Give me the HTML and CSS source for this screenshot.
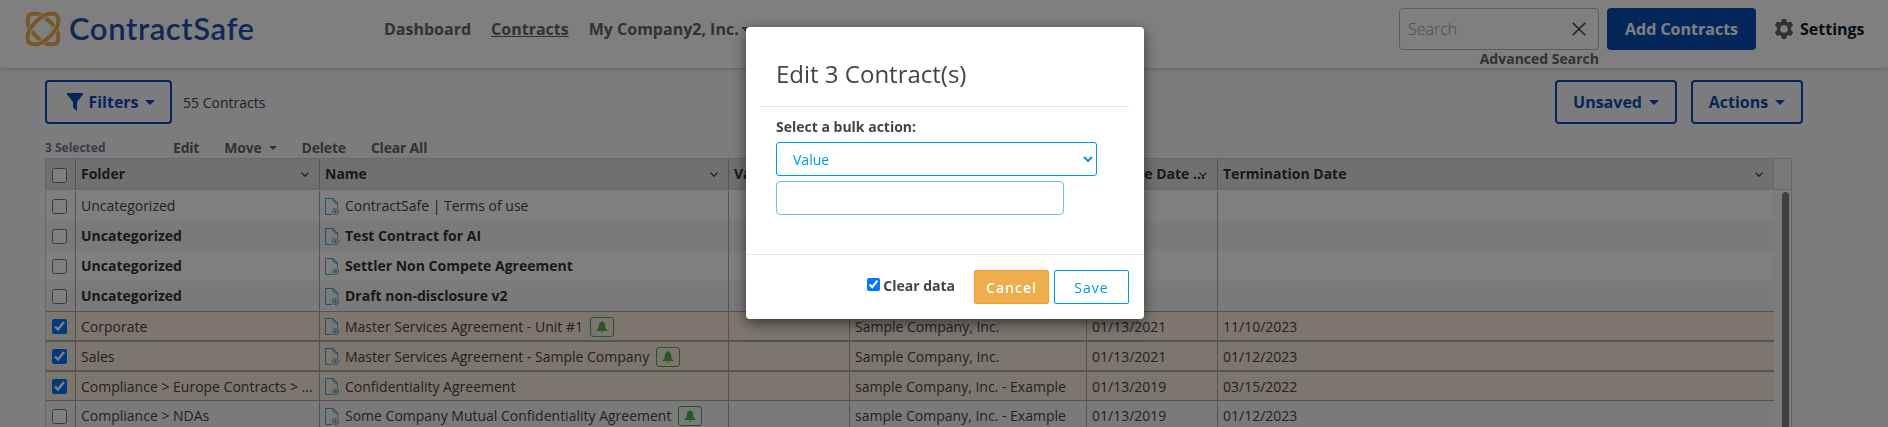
FILE: index.html
```html
<!DOCTYPE html>
<html lang="en">
  <head>
    <meta charset="utf-8" />
    <title>ContractSafe - Contracts</title>
    <link rel="stylesheet" href="styles.css">
  </head>
  <body>
    <svg class="sprite" width="0" height="0">
      <symbol id="doc" viewBox="0 0 14 17">
        <path d="M7 16.5H.5V.5H8L12.5 5V9.5M8 .5V3l2 2h2.500M8 1l4 4" fill="none" stroke="currentColor" />
        <circle cx="10.500" cy="13.500" r="3" fill="none" stroke="currentColor" />
        <path d="M10.500 11.800v3.400M8.800 13.500h3.400" stroke="currentColor" />
      </symbol>
      <symbol id="bell" viewBox="0 0 12 12">
        <path d="M6 0c.5 0 .8.400.8.900C8.600 1.400 9.200 3 9.200 4.500c0 2.500.8 3.800 2.300 4.700v.8H.5v-.8C2 8.300 2.800 7 2.800 4.500 2.800 3 3.400 1.400 5.200.900 5.200.400 5.500 0 6 0zM4.800 10.800h2.400c0 1.500-2.400 1.500-2.400 0z" fill="currentColor" />
      </symbol>
      <symbol id="chevron" viewBox="0 0 8 5">
        <path d="M.5.700L4 4.200 7.500.700" fill="none" stroke="currentColor" stroke-width="1.200" />
      </symbol>
      <path id="ring" d="M8.500 2.700H11C19 2.700 33.300 17 33.300 25V27.500Q33.300 33.300 27.500 33.300H25C17 33.300 2.700 19 2.700 11V8.500Q2.700 2.700 8.500 2.700z" fill="none" />
    </svg>

    <header class="topbar">
      <a class="logo">
        <svg width="36" height="36" viewBox="0 0 36 36">
          <use href="#ring" stroke="#f0ad4e" stroke-width="4" />
          <g transform="matrix(-1 0 0 1 36 0)">
            <path d="M14 3.500C21 6 30 15 32.500 22M22 32.500C15 30 6 21 3.500 14" fill="none" stroke="#fff" stroke-width="5.600" />
            <use href="#ring" stroke="#f0ad4e" stroke-width="4" />
          </g>
        </svg>
        <span class="logo-text">ContractSafe</span>
      </a>
      <nav class="nav">
        <a>Dashboard</a>
        <a class="active">Contracts</a>
        <a>My Company2, Inc.<i class="caret"></i></a>
      </nav>
      <div class="search">
        <div class="search-box">
          <span>Search</span>
          <svg width="14" height="14" viewBox="0 0 14 14"><path d="M.7.700l12.600 12.600M13.300.700L.7 13.300" stroke="#444" stroke-width="1.600" /></svg>
        </div>
        <a class="advanced">Advanced Search</a>
      </div>
      <a class="add">Add Contracts</a>
      <a class="settings">
        <svg width="20" height="20" viewBox="0 0 20 20">
          <path fill="#646567" fill-rule="evenodd" d="M7.900 0h4.200l.6 2.800 1.500.8 2.600-1.100 2.300 3.400-2 2.200v2.900l2 2.400-2.300 3.600-2.600-.9-1.500.9-.6 3H7.900l-.6-3-1.500-.9-2.600.9-2.300-3.600 2-2.400V8.100l-2-2.200 2.300-3.400 2.600 1.100 1.500-.8zM10 6.200a3.800 3.800 0 1 0 0 7.600 3.800 3.800 0 0 0 0-7.600z" />
        </svg>
        Settings
      </a>
    </header>

    <main class="page">
      <div class="toolbar">
        <a class="btn filters">
          <svg width="16" height="18" viewBox="0 0 16 18"><path d="M0 0h16v1.500L10 9v9l-4-3.200V9L0 1.500z" fill="#0b4db5" /></svg>
          Filters<i class="caret"></i>
        </a>
        <span class="count">55 Contracts</span>
        <a class="btn unsaved">Unsaved<i class="caret"></i></a>
        <a class="btn actions">Actions<i class="caret"></i></a>
      </div>
      <div class="selection">
        <span class="selected">3 Selected</span>
        <a>Edit</a>
        <a>Move<i class="caret"></i></a>
        <a>Delete</a>
        <a>Clear All</a>
      </div>

      <div class="grid">
        <div class="row head">
          <div class="check"><input type="checkbox" /></div>
          <div>Folder<svg class="chev"><use href="#chevron" /></svg></div>
          <div>Name<svg class="chev"><use href="#chevron" /></svg></div>
          <div>Value</div>
          <div>Company</div>
          <div class="eff">Effective Date ...<svg class="chev"><use href="#chevron" /></svg></div>
          <div>Termination Date<svg class="chev"><use href="#chevron" /></svg></div>
          <div class="corner"></div>
        </div>
        <div class="rows">
          <div class="list">
            <div class="row">
              <div class="check"><input type="checkbox" /></div>
              <div>Uncategorized</div>
              <div><svg class="doc"><use href="#doc" /></svg>ContractSafe | Terms of use</div>
              <div></div><div></div><div></div><div></div>
            </div>
            <div class="row unread">
              <div class="check"><input type="checkbox" /></div>
              <div>Uncategorized</div>
              <div><svg class="doc"><use href="#doc" /></svg>Test Contract for AI</div>
              <div></div><div></div><div></div><div></div>
            </div>
            <div class="row unread">
              <div class="check"><input type="checkbox" /></div>
              <div>Uncategorized</div>
              <div><svg class="doc"><use href="#doc" /></svg>Settler Non Compete Agreement</div>
              <div></div><div></div><div></div><div></div>
            </div>
            <div class="row unread">
              <div class="check"><input type="checkbox" /></div>
              <div>Uncategorized</div>
              <div><svg class="doc"><use href="#doc" /></svg>Draft non-disclosure v2</div>
              <div></div><div></div><div></div><div></div>
            </div>
            <div class="row picked">
              <div class="check"><input type="checkbox" checked /></div>
              <div>Corporate</div>
              <div><svg class="doc"><use href="#doc" /></svg>Master Services Agreement - Unit #1<span class="alert"><svg><use href="#bell" /></svg></span></div>
              <div></div>
              <div>Sample Company, Inc.</div>
              <div>01/13/2021</div>
              <div>11/10/2023</div>
            </div>
            <div class="row picked">
              <div class="check"><input type="checkbox" checked /></div>
              <div>Sales</div>
              <div><svg class="doc"><use href="#doc" /></svg>Master Services Agreement - Sample Company<span class="alert"><svg><use href="#bell" /></svg></span></div>
              <div></div>
              <div>Sample Company, Inc.</div>
              <div>01/13/2021</div>
              <div>01/12/2023</div>
            </div>
            <div class="row picked">
              <div class="check"><input type="checkbox" checked /></div>
              <div>Compliance &gt; Europe Contracts &gt; ...</div>
              <div><svg class="doc"><use href="#doc" /></svg>Confidentiality Agreement</div>
              <div></div>
              <div>sample Company, Inc. - Example</div>
              <div>01/13/2019</div>
              <div>03/15/2022</div>
            </div>
            <div class="row">
              <div class="check"><input type="checkbox" /></div>
              <div>Compliance &gt; NDAs</div>
              <div><svg class="doc"><use href="#doc" /></svg>Some Company Mutual Confidentiality Agreement<span class="alert"><svg><use href="#bell" /></svg></span></div>
              <div></div>
              <div>sample Company, Inc. - Example</div>
              <div>01/13/2019</div>
              <div>01/12/2023</div>
            </div>
          </div>
          <div class="track"><div class="thumb"></div></div>
        </div>
      </div>
    </main>

    <div class="overlay">
      <div class="modal">
        <h4 class="modal-title">Edit 3 Contract(s)</h4>
        <div class="modal-body">
          <label for="action">Select a bulk action:</label>
          <select id="action"><option>Value</option></select>
          <input type="text" class="value" />
        </div>
        <div class="modal-footer">
          <label class="clear"><input type="checkbox" checked />Clear data</label>
          <button class="cancel">Cancel</button>
          <button class="save">Save</button>
        </div>
      </div>
    </div>
  </body>
</html>
```

FILE: styles.css
```css
* {
  box-sizing: border-box;
}

body {
  display: flex;
  flex-direction: column;
  margin: 0;
  height: 100vh;
  overflow: hidden;
  background: #f9f9fc;
  color: #444;
  font-family: "Open Sans", "Noto Sans", sans-serif;
  font-size: 14px;
  line-height: 20px;
}

.sprite {
  position: absolute;
}

.caret {
  display: inline-block;
  margin-left: 7px;
  border: 5px solid transparent;
  border-top-color: currentColor;
  border-bottom: 0;
  vertical-align: 3px;
}

/* Top bar */
.topbar {
  position: relative;
  display: flex;
  flex: none;
  align-items: flex-start;
  height: 68px;
  padding: 8px 0 0 25px;
  background: #fff;
  box-shadow: 0 1px 5px rgba(0, 0, 0, 0.2);
  font-weight: 700;
  font-size: 16px;
}

.logo {
  display: flex;
  width: 359px;
  margin-top: 3px;
}

.logo svg {
  flex: none;
}

.logo-text {
  margin: 1px 0 0 8px;
  color: #2350ae;
  font: 600 31px/32px Lato, sans-serif;
  letter-spacing: 0.6px;
}

.nav {
  display: flex;
  gap: 20px;
  margin-top: 11px;
  color: #646567;
  white-space: nowrap;
}

.nav .caret {
  margin-left: 2px;
}

.nav .active {
  text-decoration: underline;
}

.search {
  width: 200px;
  margin-left: auto;
  text-align: right;
}

.search-box {
  display: flex;
  align-items: center;
  justify-content: space-between;
  height: 42px;
  padding: 0 12px 0 8px;
  border: 1px solid #bbb;
  border-radius: 4px;
  color: #999;
  font-weight: 300;
}

.advanced {
  display: block;
  color: #646567;
  font-size: 14px;
  line-height: 18px;
}

.add {
  width: 149px;
  height: 42px;
  margin-left: 8px;
  border-radius: 4px;
  background: #0b4db5;
  color: #fff;
  line-height: 42px;
  text-align: center;
}

.settings {
  display: flex;
  width: 114px;
  margin: 11px 0 0 18px;
  gap: 6px;
  color: #0c1b2d;
}

/* Page actions */
.page {
  flex: 1;
  display: flex;
  flex-direction: column;
  min-height: 0;
  padding: 12px 0 0 45px;
}

.toolbar {
  display: flex;
  align-items: center;
  width: 1758px;
}

.btn {
  display: flex;
  align-items: center;
  justify-content: center;
  height: 44px;
  border: 2px solid #0b4db5;
  border-radius: 4px;
  color: #0b4db5;
  font-size: 16px;
  font-weight: 700;
}

.filters {
  width: 127px;
  padding-left: 5px;
  gap: 5px;
}

.filters .caret {
  margin-left: 1px;
}

.count {
  margin-left: 11px;
  padding-top: 2px;
}

.unsaved {
  width: 122px;
  margin-left: auto;
}

.actions {
  width: 112px;
  margin-left: 14px;
}

.selection {
  display: flex;
  gap: 25px;
  height: 34px;
  padding-top: 14px;
  color: #646567;
  font-weight: 700;
  letter-spacing: -0.2px;
}

.selection .caret {
  border-width: 4px 4px 0;
}

.selected {
  width: 103px;
  color: #75798a;
  font-size: 12px;
  letter-spacing: 0;
}

/* Contract grid */
.grid {
  display: flex;
  flex: 1;
  flex-direction: column;
  width: 1747px;
  min-height: 0;
  border: 1px solid #d0d0d0;
  border-bottom: 0;
}

.row {
  display: grid;
  flex: none;
  grid-template-columns: 30px 244px 409px 121px 237px 131px 556px;
  height: 30px;
  background: #fff;
  white-space: nowrap;
}

.row > div {
  display: flex;
  align-items: center;
  padding-left: 5px;
  border-right: 1px solid #a8a8aa;
  overflow: hidden;
}

.row > div:nth-child(7) {
  border-right: 0;
}

.row > .check {
  padding-left: 6px;
}

.check input {
  width: 15px;
  height: 15px;
  margin: 0;
}

.head {
  grid-template-columns: 30px 244px 409px 121px 237px 131px 556px 17px;
  height: 31px;
  border-bottom: 1px solid #d0d0d0;
  background: #e1e1e1;
  color: #333;
  font-weight: 700;
}

.head > div:nth-child(7) {
  border-right: 1px solid #d0d0d0;
}

.head .check {
  padding-top: 3px;
}

.row > .corner {
  border: 0;
  background: #f3f3f3;
}

.chev {
  width: 8px;
  height: 5px;
  margin: 0 10px 0 auto;
  flex: none;
}

.row > .eff {
  justify-content: flex-end;
}

.eff .chev {
  margin: 0 10px 0 -6px;
}

.rows {
  display: flex;
  flex: 1;
  min-height: 0;
  overflow: hidden;
}

.list {
  width: 1728px;
  padding-top: 1px;
  background: #fff;
}

.list .row:nth-child(even) {
  background: #f5f5f5;
}

.list .row.picked {
  border: solid #a8a8aa;
  border-width: 1px 0;
  background: #faecdd;
}

.picked > div {
  padding-top: 1px;
}

.unread {
  color: #333;
  font-weight: 700;
}

.doc {
  flex: none;
  width: 14px;
  height: 17px;
  margin-right: 6px;
  color: #4aa3d0;
}

.alert {
  display: flex;
  align-items: center;
  justify-content: center;
  width: 24px;
  height: 20px;
  margin-left: 7px;
  border: 1px solid #4cae4c;
  border-radius: 3px;
  color: #4cae4c;
}

.alert svg {
  width: 12px;
  height: 12px;
}

.track {
  padding: 2px 0 0 8px;
}

.thumb {
  width: 7px;
  height: 100%;
  border-radius: 4px 4px 0 0;
  background: #808080;
}

/* Bulk edit dialog */
.overlay {
  position: fixed;
  inset: 0;
  padding-top: 27px;
  background: rgba(0, 0, 0, 0.5);
}

.modal {
  width: 398px;
  height: 292px;
  margin: 0 auto 0 746px;
  border-radius: 4px;
  background: #fff;
  box-shadow: 0 4px 14px rgba(0, 0, 0, 0.55);
}

.modal-title {
  height: 80px;
  margin: 0 15px;
  padding: 30px 15px 0;
  border-bottom: 1px solid #e5e5e5;
  font-size: 24px;
  font-weight: 400;
  line-height: 34px;
}

.modal-body {
  display: flex;
  flex-direction: column;
  height: 148px;
  padding: 10px 30px 0;
  border-bottom: 1px solid #e5e5e5;
}

.modal-body label,
.clear {
  font-weight: 700;
}

.modal-body select {
  width: 321px;
  height: 34px;
  margin-top: 5px;
  padding: 0 12px;
  border: 1px solid #0099e5;
  border-radius: 3px;
  background: #fff;
  color: #0099e5;
  font: inherit;
}

.value {
  width: 288px;
  height: 34px;
  margin-top: 5px;
  border: 1px solid #66c2ef;
  border-radius: 4px;
}

.modal-footer {
  display: flex;
  justify-content: flex-end;
  padding: 15px 15px 0;
}

.clear {
  display: flex;
  margin: 6px 19px 0 0;
}

.clear input {
  width: 13px;
  height: 13px;
  margin: 2px 3px 0 0;
}

button {
  width: 75px;
  height: 34px;
  padding: 0;
  border: 1px solid #0099e5;
  border-radius: 2px;
  background: #fff;
  color: #0099e5;
  font: 400 14px "Open Sans", sans-serif;
  letter-spacing: 1px;
}

.cancel {
  margin-right: 5px;
  border-color: #eea236;
  background: #f0ad4e;
  color: #fff;
  font-weight: 600;
}
```
